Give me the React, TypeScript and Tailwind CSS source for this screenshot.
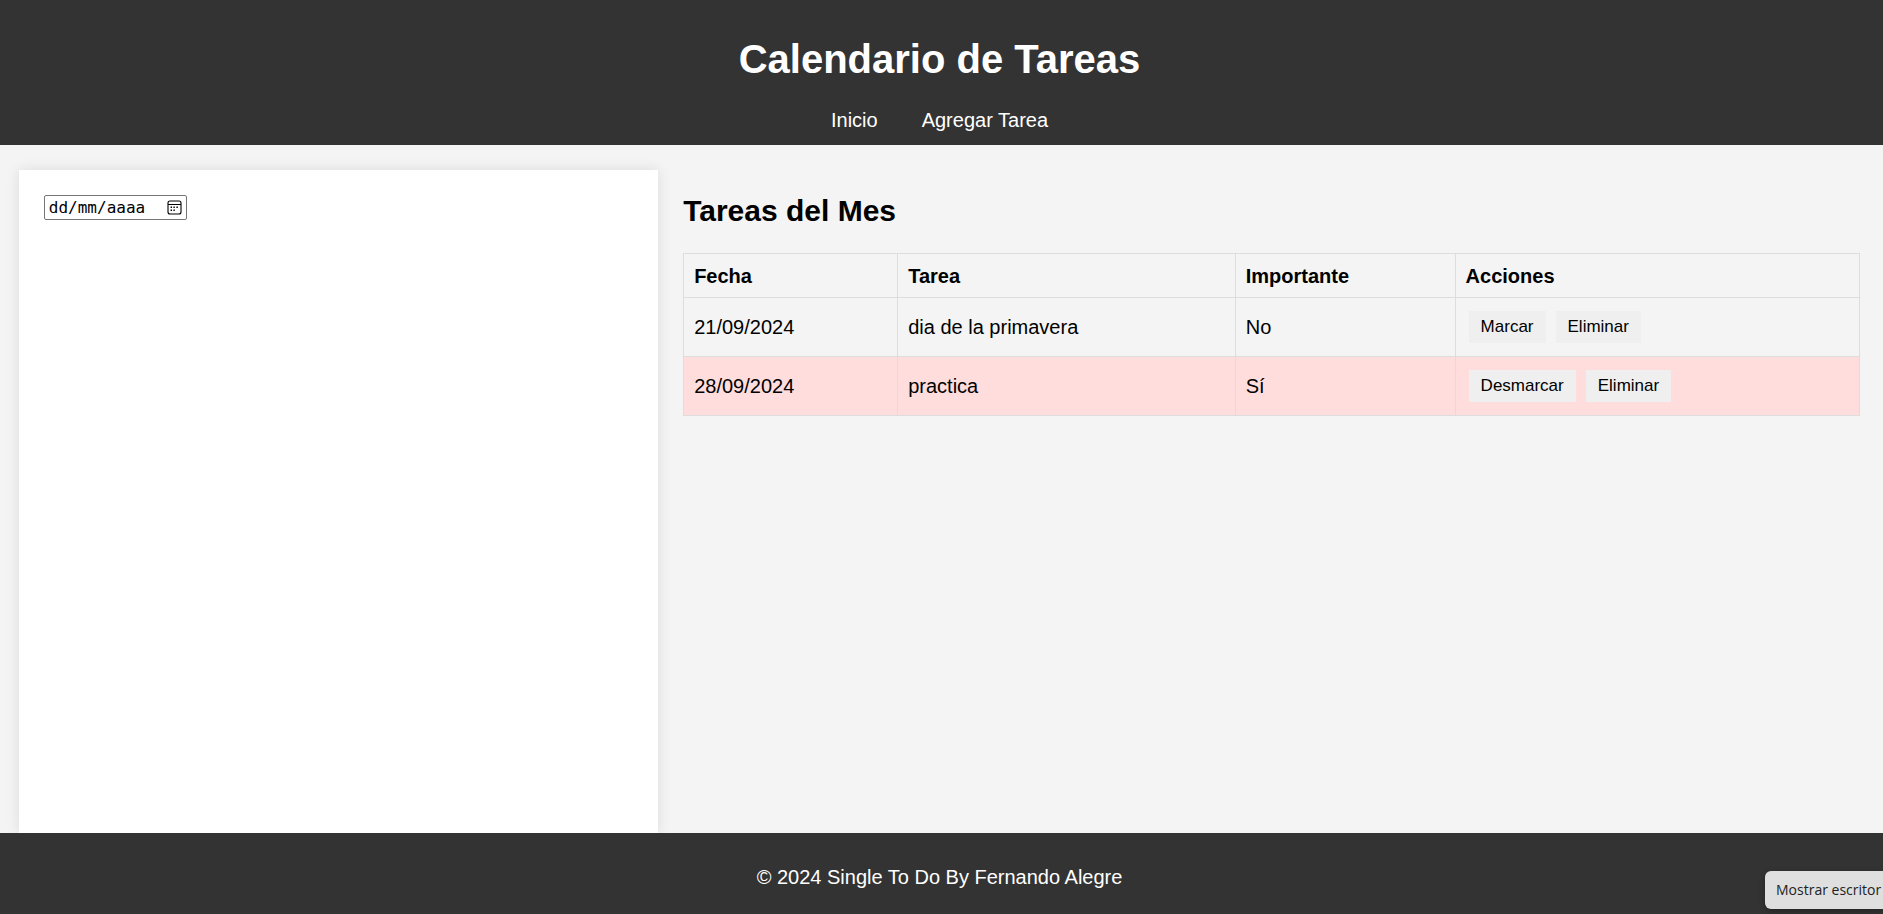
import React from "react";

type Task = { date: string; name: string; important: boolean };

const tasks: Task[] = [
  { date: "21/09/2024", name: "dia de la primavera", important: false },
  { date: "28/09/2024", name: "practica", important: true },
];

function CalendarIcon() {
  return (
    <svg width="15" height="15" viewBox="0 0 15 15" fill="none" aria-hidden="true">
      <rect x="1" y="1" width="13" height="13" rx="2" stroke="#000" strokeWidth="1.1" />
      <path d="M1 4.5h13" stroke="#000" strokeWidth="1" />
      <path
        d="M6.4 6.5h1.4v1.4H6.4zM9.4 6.5h1.4v1.4H9.4zM3.6 6.5H5v1.4H3.6zM3.6 9.5H5v1.4H3.6zM6.4 9.5h1.4v1.4H6.4z"
        fill="#000"
      />
    </svg>
  );
}

function DateField() {
  return (
    <div className="flex h-[25px] w-[143px] items-center rounded-xs border border-[#767676] bg-white px-1">
      <input
        type="text"
        aria-label="Fecha"
        placeholder="dd/mm/aaaa"
        className="min-w-0 flex-1 font-['DejaVu_Sans_Mono',monospace] text-base leading-5 text-black outline-none placeholder:text-black"
      />
      <button type="button" aria-label="Abrir calendario" className="shrink-0">
        <CalendarIcon />
      </button>
    </div>
  );
}

function ActionButton({ children }: { children: React.ReactNode }) {
  return (
    <button type="button" className="h-8 bg-[#efefef] px-3 text-[17px] leading-5 text-black">
      {children}
    </button>
  );
}

const cell = "border border-[#dddddd] px-2.5 text-left";

export default function App() {
  return (
    <div className="flex min-h-screen flex-col overflow-hidden bg-[#f4f4f4] font-['Liberation_Sans',Arial,sans-serif] text-xl leading-6 text-black">
      <header className="bg-[#333333] pt-9 pr-1 pb-[13px] text-center text-white">
        <h1 className="text-[40px] leading-[46px] font-bold">Calendario de Tareas</h1>
        <nav className="mt-[26px] flex justify-center gap-11">
          <a href="#inicio">Inicio</a>
          <a href="#agregar">Agregar Tarea</a>
        </nav>
      </header>

      <main className="flex flex-1 gap-[25px] px-[1%] pt-[25px]">
        <section className="min-w-0 flex-1 bg-white p-[25px] shadow-[0_0_13px_rgba(0,0,0,0.1)]">
          <DateField />
        </section>
        <section className="w-[64%] shrink-0 pt-6 pr-1">
          <h2 className="text-[30px] leading-[34px] font-bold">Tareas del Mes</h2>
          <table className="mt-[25px] w-full table-fixed border-collapse">
            <colgroup>
              <col className="w-[18.2%]" />
              <col className="w-[28.7%]" />
              <col className="w-[18.7%]" />
              <col className="w-[34.4%]" />
            </colgroup>
            <thead>
              <tr className="h-11">
                <th className={cell}>Fecha</th>
                <th className={cell}>Tarea</th>
                <th className={cell}>Importante</th>
                <th className={cell}>Acciones</th>
              </tr>
            </thead>
            <tbody>
              {tasks.map((task) => (
                <tr key={task.date} className={task.important ? "h-[59px] bg-[#ffdddd]" : "h-[59px]"}>
                  <td className={cell}>{task.date}</td>
                  <td className={cell}>{task.name}</td>
                  <td className={cell}>{task.important ? "Sí" : "No"}</td>
                  <td className={cell}>
                    <div className="flex gap-2.5 px-[3px]">
                      <ActionButton>{task.important ? "Desmarcar" : "Marcar"}</ActionButton>
                      <ActionButton>Eliminar</ActionButton>
                    </div>
                  </td>
                </tr>
              ))}
            </tbody>
          </table>
        </section>
      </main>

      <footer className="relative z-10 bg-[#333333] pt-8 pr-1 pb-[25px] text-center text-white">
        <p>© 2024 Single To Do By Fernando Alegre</p>
        <div
          role="tooltip"
          className="absolute right-0 bottom-[5px] flex h-[38px] w-[118px] items-center overflow-hidden rounded-l-md bg-[#dfdfdf] pl-[11px] font-['Open_Sans','Noto_Sans',sans-serif] text-sm leading-5 whitespace-nowrap text-[#222222] shadow-[0_2px_6px_rgba(0,0,0,0.3)]"
        >
          Mostrar escritor
        </div>
      </footer>
    </div>
  );
}
